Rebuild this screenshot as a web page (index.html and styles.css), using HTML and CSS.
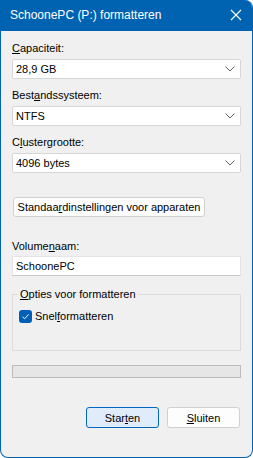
FILE: index.html
```html
<!DOCTYPE html>
<html lang="nl">
<head>
    <meta charset="UTF-8">
    <meta name="viewport" content="width=device-width, initial-scale=1.0">
    <title>SchoonePC (P:) formatteren</title>
    <link rel="stylesheet" href="styles.css">
</head>
<body>
    <div class="window">
        <div class="titlebar">
            <span class="title">SchoonePC (P:) formatteren</span>
            <svg class="close" width="12" height="12" viewBox="0 0 12 12">
                <path d="M1 1 L11 11 M11 1 L1 11" stroke="#fff" stroke-width="1.1" fill="none"/>
            </svg>
        </div>

        <div class="content">
            <label class="label first"><u>C</u>apaciteit:</label>
            <div class="select">
                <span>28,9 GB</span>
                <svg width="10" height="6" viewBox="0 0 10 6"><path d="M0.5 0.5 L5 5 L9.5 0.5" stroke="#5f5f5f" fill="none"/></svg>
            </div>

            <label class="label">Best<u>a</u>ndssysteem:</label>
            <div class="select">
                <span>NTFS</span>
                <svg width="10" height="6" viewBox="0 0 10 6"><path d="M0.5 0.5 L5 5 L9.5 0.5" stroke="#5f5f5f" fill="none"/></svg>
            </div>

            <label class="label">C<u>l</u>ustergrootte:</label>
            <div class="select">
                <span>4096 bytes</span>
                <svg width="10" height="6" viewBox="0 0 10 6"><path d="M0.5 0.5 L5 5 L9.5 0.5" stroke="#5f5f5f" fill="none"/></svg>
            </div>

            <button class="btn defaults">Standaa<u>r</u>dinstellingen voor apparaten</button>

            <label class="label volume">Volume<u>n</u>aam:</label>
            <div class="textbox">SchoonePC</div>

            <fieldset class="options">
                <legend><u>O</u>pties voor formatteren</legend>
                <div class="check-row">
                    <span class="checkbox">
                        <svg width="13" height="13" viewBox="0 0 13 13"><path d="M3.5 6.8 L5.6 8.8 L9.6 4.4" stroke="#fff" stroke-width="1" fill="none"/></svg>
                    </span>
                    <span>Snel<u>f</u>ormatteren</span>
                </div>
            </fieldset>

            <div class="progress"></div>

            <div class="actions">
                <button class="btn primary">Star<u>t</u>en</button>
                <button class="btn"><u>S</u>luiten</button>
            </div>
        </div>
    </div>
</body>
</html>
```

FILE: styles.css
```css
body {
    margin: 0;
    padding: 0;
    background: #ffffff;
    font-family: "Liberation Sans", Arial, sans-serif;
    font-size: 11px;
    color: #000;
}
.window {
    width: 253px;
    height: 458px;
    box-sizing: border-box;
    background: #f0f0f0;
    border: 1px solid #0063b1;
    border-top: none;
    border-radius: 0 8px 8px 8px;
    overflow: hidden;
}
.titlebar {
    height: 31px;
    background: #0063b1;
    color: #fff;
    display: flex;
    align-items: center;
    justify-content: space-between;
    padding: 0 10px 0 9px;
    white-space: nowrap;
}
.title {
    font-size: 12px;
    line-height: 16px;
    padding-bottom: 1px;
}
.close {
    margin-bottom: 1px;
}
.content {
    padding: 0 11px;
    display: flex;
    flex-direction: column;
    white-space: nowrap;
}
.label {
    display: block;
    line-height: 16px;
    margin-top: 8px;
    margin-bottom: 3px;
}
.label.first {
    margin-top: 9px;
}
.label.volume {
    margin-top: 21px;
    margin-bottom: 2px;
}
.select {
    height: 20px;
    box-sizing: border-box;
    background: #fff;
    border: 1px solid #d6d6d6;
    border-radius: 2px;
    display: flex;
    align-items: center;
    justify-content: space-between;
    padding: 0 5px 0 3px;
}
.select span {
    line-height: 16px;
}
.textbox {
    height: 20px;
    box-sizing: border-box;
    background: #fff;
    border: 1px solid #e4e4e4;
    border-bottom-color: #c8c8c8;
    padding: 0 3px;
    line-height: 18px;
}
.btn {
    font-family: inherit;
    font-size: 11px;
    color: #000;
    background: #fdfdfd;
    border: 1px solid #d0d0d0;
    border-radius: 3px;
    height: 21px;
    padding: 0;
    line-height: 18px;
    white-space: nowrap;
}
.defaults {
    align-self: flex-start;
    margin: 24px 0 0 1px;
    height: 20px;
    width: 192px;
}
.options {
    margin: 10px 0 0;
    padding: 0 6px;
    border: 1px solid #dcdcdc;
    height: 65px;
    box-sizing: border-box;
    min-width: 0;
}
.options legend {
    padding: 0 2px;
    line-height: 16px;
    margin-left: -1px;
}
.check-row {
    display: flex;
    align-items: center;
    gap: 3px;
    margin-top: 6px;
    line-height: 16px;
}
.checkbox {
    width: 13px;
    height: 13px;
    background: #005fb8;
    border-radius: 3px;
    display: flex;
}
.progress {
    margin-top: 14px;
    height: 13px;
    box-sizing: border-box;
    background: #e6e6e6;
    border: 1px solid #bcbcbc;
}
.actions {
    display: flex;
    justify-content: flex-end;
    gap: 8px;
    margin-top: 29px;
    padding-right: 1px;
}
.actions .btn {
    width: 73px;
}
.btn.primary {
    background: #e0ecf9;
    border-color: #0067c0;
}
```
